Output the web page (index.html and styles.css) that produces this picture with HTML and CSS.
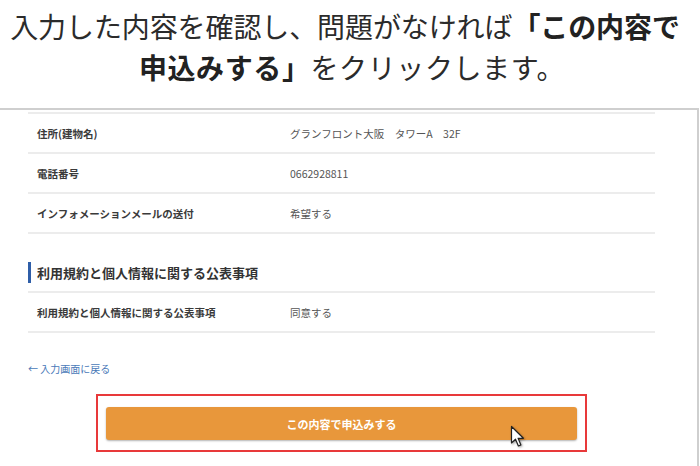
FILE: index.html
```html
<!DOCTYPE html>
<html lang="ja">
<head>
<meta charset="utf-8">
<link rel="stylesheet" href="styles.css">
</head>
<body>
<div class="intro">
  <p class="line line1">入力した内容を確認し、問題がなければ<b>「この内容で</b></p>
  <p class="line line2"><b>申込みする」</b>をクリックします。</p>
</div>
<div class="frame">
  <div class="content">
    <div class="table">
      <div class="row"><div class="label">住所(建物名)</div><div class="value">グランフロント大阪　タワーA　32F</div></div>
      <div class="row"><div class="label">電話番号</div><div class="value">0662928811</div></div>
      <div class="row"><div class="label">インフォメーションメールの送付</div><div class="value">希望する</div></div>
    </div>
    <h2 class="section">利用規約と個人情報に関する公表事項</h2>
    <div class="table">
      <div class="row"><div class="label">利用規約と個人情報に関する公表事項</div><div class="value">同意する</div></div>
    </div>
    <a class="back" href="#">← 入力画面に戻る</a>
    <div class="highlight">
      <button class="submit" type="button">この内容で申込みする</button>
    </div>
  </div>
</div>
<svg class="cursor" width="16" height="24" viewBox="0 0 16 24">
  <path d="M1.5 1.5 L1.5 18 L5.5 14.2 L8.4 21 L10.9 19.9 L8.1 13.3 L13.4 13.3 Z" fill="#fff" stroke="#222" stroke-width="1.2" stroke-linejoin="round"/>
</svg>
</body>
</html>
```
FILE: styles.css
```css
* { box-sizing: border-box; }
html, body { margin: 0; padding: 0; background: #fff; }
body {
  width: 700px;
  height: 466px;
  overflow: hidden;
  position: relative;
  font-family: "Noto Sans CJK JP", "Noto Sans", sans-serif;
  color: #333;
}
.intro {
  height: 108px;
  padding-top: 6px;
}
.line {
  margin: 0;
  font-size: 28px;
  line-height: 41px;
  text-align: center;
  color: #2b2b2b;
  white-space: nowrap;
}
.line1 { padding-right: 10px; letter-spacing: -0.1px; }
.line2 { padding-left: 4px; letter-spacing: 0.6px; }
.line b { font-weight: 700; color: #222; }
.frame {
  width: 699px;
  height: 358px;
  border-top: 2px solid #cfcfcf;
  border-right: 2px solid #cfcfcf;
  padding-top: 2px;
}
.content {
  margin-left: 28px;
  width: 627px;
}
.table { border-top: 2px solid #ececec; }
.row {
  display: grid;
  grid-template-columns: 253px 1fr;
  align-items: center;
  height: 40px;
  padding-left: 9px;
  border-bottom: 2px solid #ececec;
  font-size: 10.5px;
}
.label { font-weight: 700; color: #3a3a3a; }
.value { color: #555; }
.section {
  margin: 28px 0 8px;
  height: 21px;
  border-left: 3px solid #2f5ea8;
  padding-left: 6px;
  font-size: 13px;
  line-height: 21px;
  font-weight: 700;
  color: #333;
}
.back {
  display: block;
  margin-top: 29px;
  font-size: 10px;
  line-height: 14px;
  color: #4a79b8;
  text-decoration: none;
}
.highlight {
  width: 491px;
  height: 58px;
  margin: 18px auto 0;
  border: 2px solid #e8393a;
  padding: 11px 8px 0;
}
.submit {
  display: block;
  width: 100%;
  height: 33px;
  border: 0;
  border-radius: 3px;
  background: #e8973b;
  box-shadow: 0 1px 2px rgba(0,0,0,0.3);
  color: #fff;
  font-family: "Noto Sans CJK JP", sans-serif;
  font-size: 11px;
  font-weight: 700;
}
.cursor {
  position: absolute;
  left: 510px;
  top: 425px;
  filter: drop-shadow(1px 1px 1px rgba(0,0,0,0.35));
}
```
